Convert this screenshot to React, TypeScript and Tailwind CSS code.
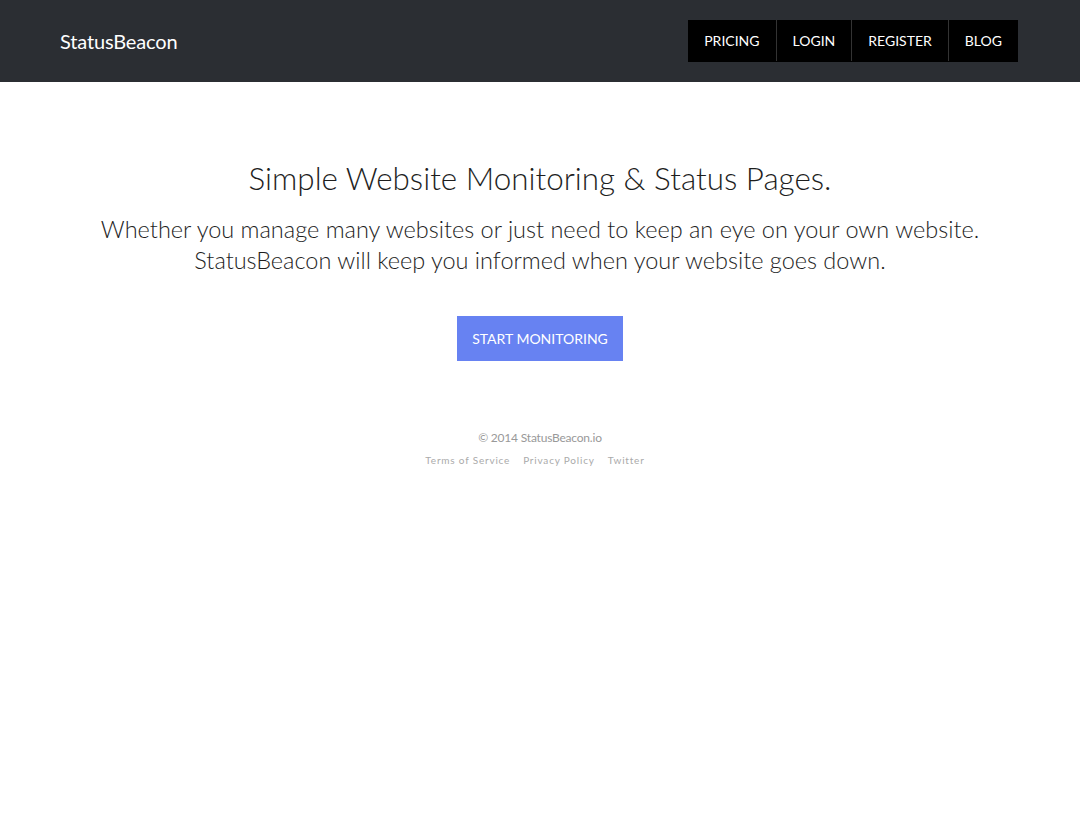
const NAV = ["Pricing", "Login", "Register", "Blog"];

export default function App() {
  return (
    <div className="min-h-[840px] bg-white font-['Lato','Liberation_Sans',sans-serif]">
      <header className="flex h-[82px] items-center justify-between bg-[#2b2e33] pl-[60px] pr-[62px]">
        <a className="text-[20px] tracking-[-0.15px] text-white">StatusBeacon</a>
        <nav className="flex h-[42px] bg-black pb-[1px]">
          {NAV.map((n, i) => (
            <a
              key={n}
              className={`flex items-center px-4 text-[14px] uppercase text-white ${
                i > 0 ? "border-l border-[#333]" : ""
              }`}
            >
              {n}
            </a>
          ))}
        </nav>
      </header>

      <main className="flex flex-col items-center pt-[76px] text-center text-[#1e1e1e]">
        <h1 className="text-[31.4px] leading-[40px] font-light">
          Simple Website Monitoring &amp; Status Pages.
        </h1>
        <p className="mt-[16px] text-[23.5px] leading-[31px] font-light">
          Whether you manage many websites or just need to keep an eye on your own website.
          <br />
          StatusBeacon will keep you informed when your website goes down.
        </p>
        <a className="mt-[40px] flex h-[45px] w-[166px] items-center justify-center bg-[#6782f2] text-[14px] uppercase text-white">
          Start Monitoring
        </a>

        <footer className="mt-[68px] flex flex-col items-center">
          <p className="text-[12px] tracking-[-0.2px] text-[#999]">© 2014 StatusBeacon.io</p>
          <div className="mt-[6px] flex gap-[13px] pr-[10px] text-[10px] tracking-[0.8px] text-[#aaa]">
            <a>Terms of Service</a>
            <a>Privacy Policy</a>
            <a>Twitter</a>
          </div>
        </footer>
      </main>
    </div>
  );
}
